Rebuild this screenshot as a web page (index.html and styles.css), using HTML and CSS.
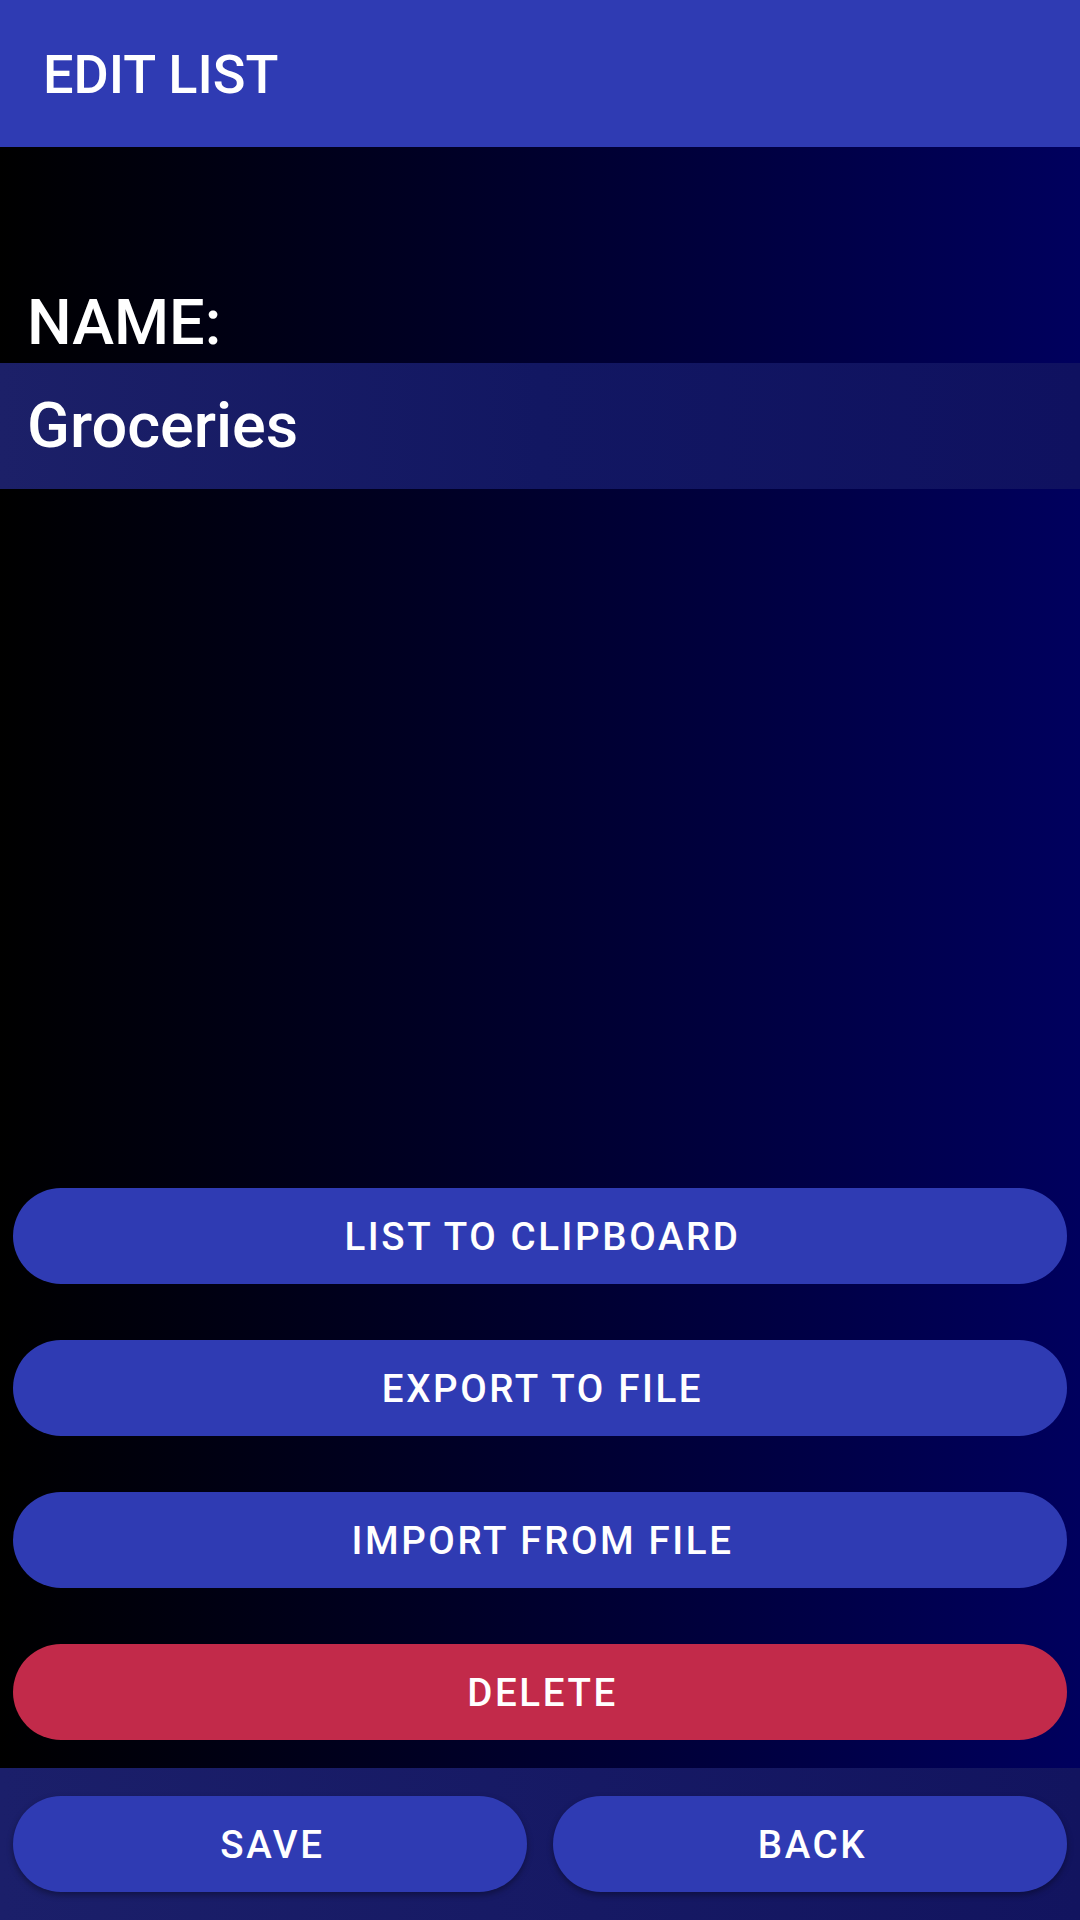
FILE: index.html
```html
<!DOCTYPE html>
<html>
<head>
<meta charset="utf-8">
<link rel="stylesheet" href="styles.css">
</head>
<body>
<div class="app">
  <header class="toolbar"><h1 class="title">EDIT LIST</h1></header>
  <main class="content">
    <div class="name-label">NAME:</div>
    <div class="name-field">Groceries</div>
    <div class="spacer"></div>
    <div class="actions">
      <button class="btn">LIST TO CLIPBOARD</button>
      <button class="btn">EXPORT TO FILE</button>
      <button class="btn">IMPORT FROM FILE</button>
      <button class="btn btn-danger">DELETE</button>
    </div>
  </main>
  <footer class="bottom-bar">
    <button class="btn btn-raised">SAVE</button>
    <button class="btn btn-raised">BACK</button>
  </footer>
</div>
</body>
</html>
```
FILE: styles.css
```css
* { box-sizing: border-box; }
html, body { margin: 0; padding: 0; }
body {
  width: 1080px;
  height: 1920px;
  font-family: Roboto, "Noto Sans", sans-serif;
  color: #fff;
  background: #000;
}
.app {
  width: 1080px;
  height: 1920px;
  display: flex;
  flex-direction: column;
}
.toolbar {
  height: 147px;
  background: #2f3bb3;
  display: flex;
  align-items: center;
  padding-left: 43px;
  flex-shrink: 0;
}
.title {
  margin: 0;
  font-size: 54px;
  font-weight: 500;
  line-height: 1;
  padding-top: 2px;
}
.content {
  flex: 1;
  display: flex;
  flex-direction: column;
  background: linear-gradient(to right, #000000 0%, #000024 40%, #00005e 100%);
  padding-top: 136px;
}
.name-label {
  font-size: 63px;
  font-weight: 500;
  line-height: 80px;
  padding-left: 27px;
}
.name-field {
  height: 126px;
  background: linear-gradient(to right, #1c2068, #121762 50%, #0f1160);
  font-size: 63px;
  font-weight: 500;
  line-height: 126px;
  padding-left: 27px;
}
.spacer { flex: 1; }
.actions {
  display: flex;
  flex-direction: column;
  gap: 56px;
  padding: 0 13px 28px;
}
.btn {
  height: 96px;
  border: none;
  border-radius: 48px;
  background: #2f3bb3;
  color: #fff;
  font-family: Roboto, "Noto Sans", sans-serif;
  font-size: 38.5px;
  font-weight: 500;
  letter-spacing: 2.6px;
  padding: 0 0 0 5px;
  text-align: center;
}
.btn-danger { background: #c22a4a; }
.bottom-bar {
  height: 152px;
  flex-shrink: 0;
  background: linear-gradient(to right, #1b1f6a, #12145f);
  display: grid;
  grid-template-columns: 1fr 1fr;
  gap: 26px;
  padding: 28px 13px 28px;
}
.btn-raised {
  box-shadow: 0 3px 6px rgba(0, 0, 0, 0.35);
}
```
